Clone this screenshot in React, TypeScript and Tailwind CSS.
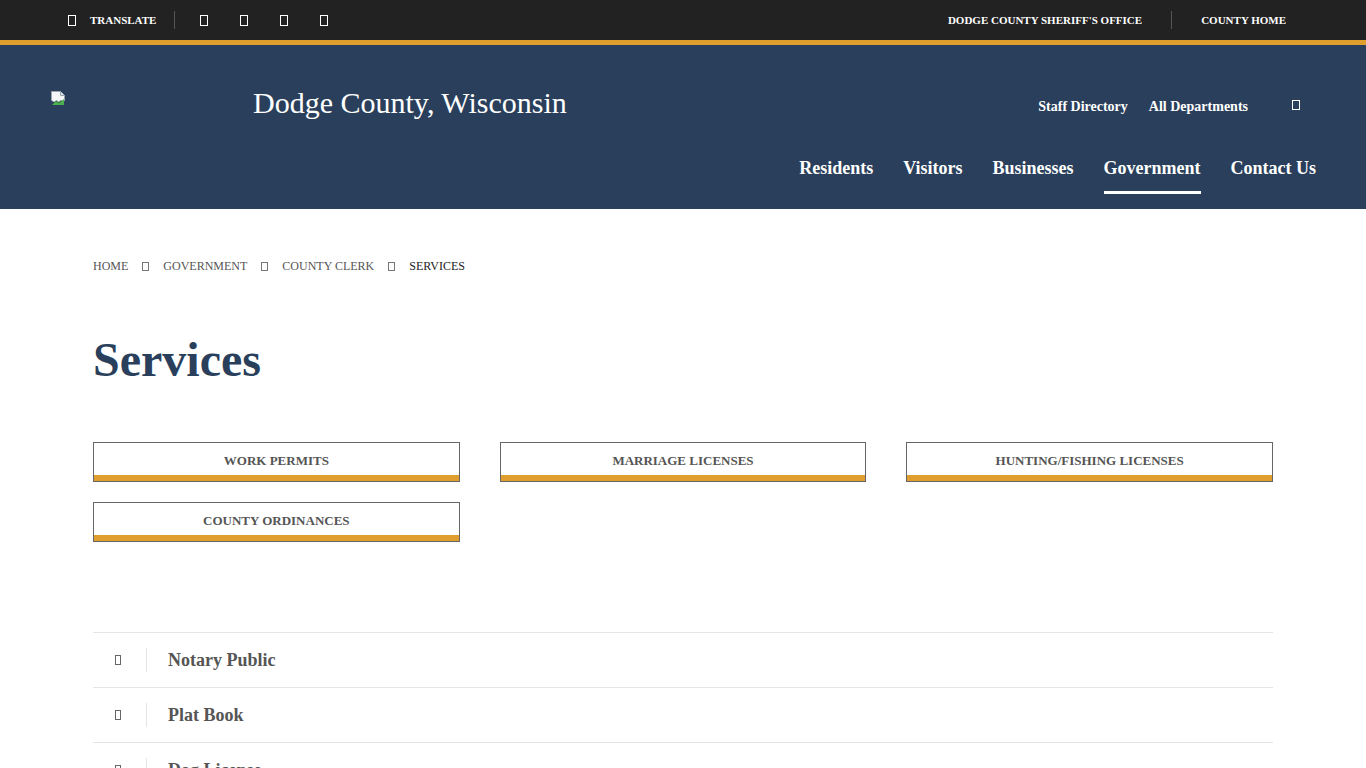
import React from "react";

function Tofu({ className = "" }: { className?: string }) {
  return <span className={"inline-block border border-current box-border " + className} />;
}

function BrokenImage() {
  return (
    <svg width="16" height="16" viewBox="0 0 16 16" className="block">
      <path d="M1.5 1.5h9l4 4v5l-2 1.5-2-1.5-2 1.5-2-1.5-2 1.5-3-1.5z" fill="#f4f6f8" stroke="#9aa5b1" strokeWidth="1" />
      <path d="M10.5 1.5v4h4" fill="#dfe4ea" stroke="#9aa5b1" strokeWidth="1" />
      <path d="M2 15l4-4 3 2 5-4v6z" fill="#4caf50" />
      <path d="M2 15l4-4 3 2 3-2.5" fill="none" stroke="#2e7d32" strokeWidth="0.8" />
    </svg>
  );
}

export default function App() {
  const serif = { fontFamily: '"Liberation Serif", "Times New Roman", serif' };
  const buttons = ["WORK PERMITS", "MARRIAGE LICENSES", "HUNTING/FISHING LICENSES", "COUNTY ORDINANCES"];
  const rows = ["Notary Public", "Plat Book", "Dog License"];
  const crumbs = ["HOME", "GOVERNMENT", "COUNTY CLERK"];
  return (
    <div style={serif} className="w-full min-h-screen bg-white">
      {/* top utility bar */}
      <div className="h-[40px] bg-[#222222] flex items-center justify-between pl-[68px] pr-[80px] text-white">
        <div className="flex items-center">
          <Tofu className="w-[8px] h-[11px]" />
          <span className="ml-[14px] text-[11px] font-bold leading-none">TRANSLATE</span>
          <span className="ml-[18px] w-px h-[18px] bg-[#555]" />
          <div className="flex items-center gap-[32px] ml-[25px]">
            <Tofu className="w-[8px] h-[11px]" />
            <Tofu className="w-[8px] h-[11px]" />
            <Tofu className="w-[8px] h-[11px]" />
            <Tofu className="w-[8px] h-[11px]" />
          </div>
        </div>
        <div className="flex items-center text-[11px] font-bold leading-none">
          <span>DODGE COUNTY SHERIFF'S OFFICE</span>
          <span className="mx-[29px] w-px h-[18px] bg-[#555]" />
          <span>COUNTY HOME</span>
        </div>
      </div>
      <div className="h-[5px] bg-[#e09e2e]" />
      {/* header */}
      <div className="bg-[#2a3f5b] px-[50px] pt-[28px] pb-[15px] text-white">
        <div className="h-[60px] flex items-center justify-between">
          <div className="flex items-center">
            <div className="w-[203px] -mt-[10px]">
              <BrokenImage />
            </div>
            <span className="text-[30px] leading-none">Dodge County, Wisconsin</span>
          </div>
          <div className="flex items-center pt-[6px] text-[14px] font-bold">
            <span>Staff Directory</span>
            <span className="ml-[21px]">All Departments</span>
            <div className="ml-[28px] w-[40px] flex justify-center -mt-[3px]">
              <Tofu className="w-[8px] h-[10px]" />
            </div>
          </div>
        </div>
        <div className="flex justify-end gap-[30px] pt-[23px] text-[18px] font-bold">
          {["Residents", "Visitors", "Businesses", "Government", "Contact Us"].map((n) => (
            <span
              key={n}
              className={
                "leading-[24px] pb-[11px] border-b-[3px] " +
                (n === "Government" ? "border-white" : "border-transparent")
              }
            >
              {n}
            </span>
          ))}
        </div>
      </div>
      {/* main */}
      <div className="w-[1180px] mx-auto pt-[49px]">
        <div className="flex items-center gap-[14px] text-[12px] leading-[16px] text-[#555]">
          {crumbs.map((c) => (
            <React.Fragment key={c}>
              <span>{c}</span>
              <Tofu className="w-[7px] h-[9px] text-[#777]" />
            </React.Fragment>
          ))}
          <span className="text-[#222]">SERVICES</span>
        </div>
        <h1 className="mt-[58px] text-[48px] leading-[56px] font-bold text-[#2a3f5b]">Services</h1>
        <div className="mt-[54px] grid grid-cols-3 gap-x-[40px] gap-y-[20px]">
          {buttons.map((b) => (
            <div key={b} className="h-[40px] border border-[#666] flex flex-col">
              <div className="flex-1 flex items-center justify-center pt-[3px] text-[13px] font-bold text-[#555]">
                {b}
              </div>
              <div className="h-[6px] bg-[#e09e2e]" />
            </div>
          ))}
        </div>
        <div className="mt-[90px]">
          {rows.map((r) => (
            <div key={r} className="h-[55px] border-t border-[#e5e5e5] flex items-center">
              <div className="w-[54px] flex items-center">
                <Tofu className="ml-[22px] w-[7px] h-[10px] text-[#666]" />
                <span className="ml-[25px] w-px h-[24px] bg-[#e5e5e5]" />
              </div>
              <span className="ml-[21px] text-[18px] font-bold text-[#555]">{r}</span>
            </div>
          ))}
          <div className="border-t border-[#e5e5e5]" />
        </div>
        <div className="h-[60px]" />
      </div>
    </div>
  );
}
